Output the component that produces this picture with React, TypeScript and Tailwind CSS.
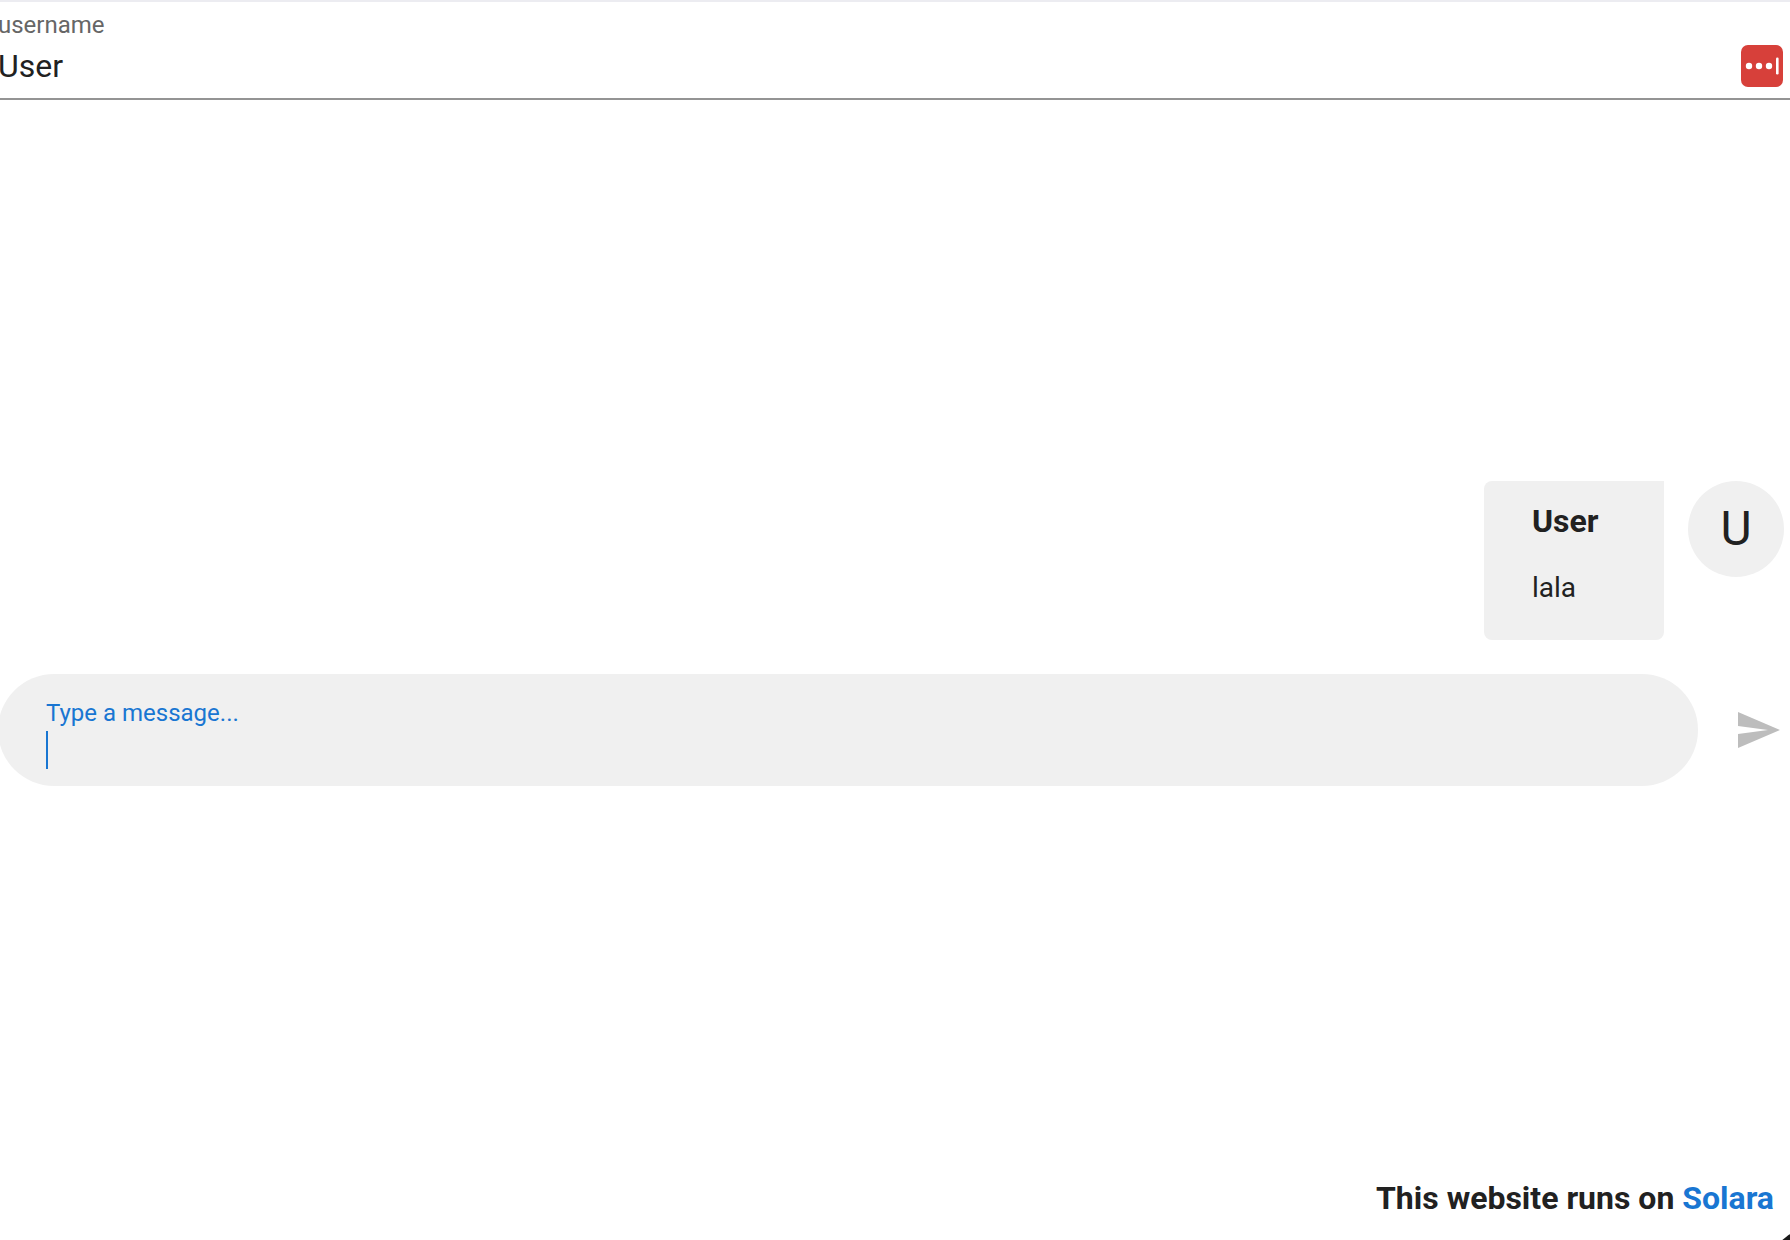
import { useState } from "react";

type Message = {
  user: string;
  text: string;
};

const messages: Message[] = [{ user: "User", text: "lala" }];

const UsernameField = (props: {
  value: string;
  onChange: (value: string) => void;
}) => {
  return (
    <div className="flex h-[98px] items-end border-b-2 border-[#949494] pr-[7px]">
      <div className="flex flex-1 flex-col">
        <label htmlFor="username" className="text-2xl text-[#666666]">
          username
        </label>
        <input
          id="username"
          type="text"
          value={props.value}
          onChange={(e) => props.onChange(e.target.value)}
          className="mt-px mb-2 h-12 w-full bg-transparent text-[32px] outline-none"
        />
      </div>
      <button type="button" aria-label="Fill in username" className="mb-[11px]">
        <svg viewBox="0 0 42 42" className="size-[42px]">
          <rect width="42" height="42" rx="7" fill="#d7403a" />
          <circle cx="8" cy="21" r="3.2" fill="#fff" />
          <circle cx="18" cy="21" r="3.2" fill="#fff" />
          <circle cx="28" cy="21" r="3.2" fill="#fff" />
          <rect x="35" y="12.5" width="2.6" height="17" rx="1.2" fill="#fff" />
        </svg>
      </button>
    </div>
  );
};

const ChatMessage = ({ user, text }: Message) => {
  return (
    <div className="flex items-start justify-end gap-6 pr-1.5">
      <div className="min-w-[180px] rounded-lg rounded-tr-none bg-[#f0f0f0] px-12 pt-4 pb-[30px]">
        <p className="text-[32px] leading-[48px] font-bold">{user}</p>
        <p className="mt-[21px] text-[28px] leading-[44px]">{text}</p>
      </div>
      <div className="flex size-24 items-center justify-center rounded-full bg-[#f0f0f0] text-5xl">
        {user[0]}
      </div>
    </div>
  );
};

const ChatInput = () => {
  const [draft, setDraft] = useState("");

  return (
    <form
      className="flex items-center gap-9 pr-2"
      onSubmit={(e) => e.preventDefault()}
    >
      <div className="flex h-28 flex-1 flex-col rounded-full bg-[#f0f0f0] px-12 pt-[23px]">
        <label htmlFor="message" className="text-2xl text-[#1976d2]">
          Type a message...
        </label>
        <div className="mt-0.5 flex h-[38px]">
          {draft === "" && <span className="w-0.5 bg-[#1976d2]" />}
          <input
            id="message"
            type="text"
            value={draft}
            onChange={(e) => setDraft(e.target.value)}
            className="w-full bg-transparent text-[32px] caret-transparent outline-none"
          />
        </div>
      </div>
      <button type="submit" aria-label="Send">
        <svg viewBox="0 0 24 24" className="size-12" fill="#bdbdbd">
          <path d="M2,21L23,12L2,3V10L17,12L2,14V21Z" />
        </svg>
      </button>
    </form>
  );
};

const App = () => {
  const [username, setUsername] = useState("User");

  return (
    <div className="min-h-screen overflow-hidden border-t-2 border-[#ececf1] bg-white font-[Roboto,sans-serif] text-[#212121]">
      <div className="-ml-0.5 flex min-h-[calc(100vh-2px)] flex-col">
        <UsernameField value={username} onChange={setUsername} />
        <main className="flex flex-col gap-[34px]">
          <div className="flex h-[540px] flex-col justify-end gap-6">
            {messages.map((message, index) => (
              <ChatMessage key={index} {...message} />
            ))}
          </div>
          <ChatInput />
        </main>
        <footer className="mt-auto pr-4 pb-[18px] text-right text-[32px] leading-[48px] font-bold">
          This website runs on{" "}
          <a href="https://solara.dev" className="text-[#1976d2]">
            Solara
          </a>
        </footer>
      </div>
      {/* floating badge, mostly past the corner of the window */}
      <div
        aria-hidden="true"
        className="fixed -right-[53px] -bottom-[59px] size-[70px] rounded-full bg-[#1a1a1a]"
      />
    </div>
  );
};

export default App;
